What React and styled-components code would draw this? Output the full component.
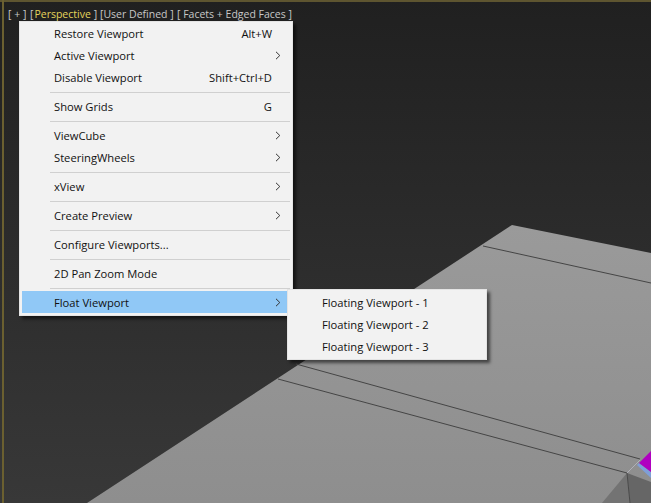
import React from "react";
import styled, { createGlobalStyle } from "styled-components";

const Global = createGlobalStyle`
  html, body { margin: 0; padding: 0; background: #2a2a2a; }
  body { width: 651px; height: 503px; overflow: hidden; }
`;

const Viewport = styled.div`
  position: relative;
  width: 651px;
  height: 503px;
  box-sizing: border-box;
  overflow: hidden;
  background: linear-gradient(180deg, #202020 0%, #383838 100%);
  font-family: "Open Sans", "Noto Sans", sans-serif;
  font-size: 11.2px;
`;

const FrameTop = styled.div`
  position: absolute;
  left: 0;
  top: 0;
  width: 100%;
  height: 2px;
  background: #5e5530;
`;

const FrameLeft = styled.div`
  position: absolute;
  left: 2px;
  top: 0;
  width: 2px;
  height: 100%;
  background: #6b6030;
`;

const Scene = styled.svg`
  position: absolute;
  inset: 0;
`;

const Labels = styled.div`
  position: relative;
  display: flex;
  padding: 6px 0 0 8px;
  height: 17px;
  line-height: 17px;
  font-size: 10.5px;
  white-space: pre;
`;

const Label = styled.span`
  width: ${(p) => p.$width}px;
  color: #c8c8c8;
`;

const Active = styled.span`
  color: #e4d45c;
  margin: 0 3px 0 1px;
`;

const Menu = styled.div`
  position: absolute;
  left: ${(p) => p.$left}px;
  top: ${(p) => p.$top}px;
  width: ${(p) => p.$width}px;
  box-sizing: border-box;
  padding: ${(p) => p.$padTop}px 2px 2px;
  background: #f2f2f2;
  border: 1px solid #e4e4e4;
  box-shadow: 3px 3px 3px rgba(0, 0, 0, 0.55);
  color: #111;
`;

const Item = styled.div`
  display: flex;
  align-items: center;
  height: 22px;
  padding-left: 32px;
  background: ${(p) => (p.$selected ? "#90c8f6" : "transparent")};
`;

const ItemName = styled.span`
  flex: 1;
`;

const Shortcut = styled.span`
  margin-right: 18px;
`;

const Chevron = styled.svg`
  width: 6px;
  height: 9px;
  margin-right: 9px;
`;

const Separator = styled.div`
  height: 1px;
  margin: 4px 0 2px 28px;
  background: #d0d0d0;
`;

const Arrow = () => (
  <Chevron viewBox="0 0 6 9">
    <path d="M1 0.8 L4.8 4.5 L1 8.2" fill="none" stroke="#333" strokeWidth="1" />
  </Chevron>
);

const groups = [
  [
    { name: "Restore Viewport", key: "Alt+W" },
    { name: "Active Viewport", sub: true },
    { name: "Disable Viewport", key: "Shift+Ctrl+D" },
  ],
  [{ name: "Show Grids", key: "G" }],
  [
    { name: "ViewCube", sub: true },
    { name: "SteeringWheels", sub: true },
  ],
  [{ name: "xView", sub: true }],
  [{ name: "Create Preview", sub: true }],
  [{ name: "Configure Viewports..." }],
  [{ name: "2D Pan Zoom Mode" }],
  [{ name: "Float Viewport", sub: true, selected: true }],
];

export default function App() {
  return (
    <Viewport>
      <Global />
      <Scene width="651" height="503" viewBox="0 0 651 503">
        <defs>
          <linearGradient id="floor" x1="0" y1="0" x2="0" y2="1">
            <stop offset="0" stopColor="#9a9a9a" />
            <stop offset="1" stopColor="#8e8e8e" />
          </linearGradient>
        </defs>
        <polygon points="512,225 651,253 651,503 87,503" fill="url(#floor)" />
        <g stroke="#454545" strokeWidth="1">
          <line x1="483" y1="246" x2="651" y2="283" />
          <line x1="296" y1="364" x2="640" y2="459" />
          <line x1="278" y1="379" x2="627" y2="473" />
        </g>
        <polygon points="627,473 602,503 630,503" fill="#737373" />
        <polygon points="627,473 651,482 651,503 630,503" fill="#666666" />
        <line x1="627" y1="473" x2="630" y2="503" stroke="#4a4a4a" strokeWidth="1" />
        <line x1="627" y1="473" x2="640" y2="460" stroke="#b0b0b8" strokeWidth="1" />
        <polygon points="637,465 639,463 651,472 651,478" fill="#7f9fd8" />
        <polygon points="639,463 651,451 651,472" fill="#b000c0" />
      </Scene>
      <FrameTop />
      <FrameLeft />
      <Labels>
        <Label $width={22}>[ + ]</Label>
        <Label $width={70}>[<Active>Perspective</Active>]</Label>
        <Label $width={77}>[User Defined ]</Label>
        <Label>[ Facets + Edged Faces ]</Label>
      </Labels>
      <Menu $left={19} $top={21} $width={274} $padTop={0}>
        {groups.map((group, i) => (
          <React.Fragment key={i}>
            {i > 0 && <Separator />}
            {group.map((it) => (
              <Item key={it.name} $selected={it.selected}>
                <ItemName>{it.name}</ItemName>
                {it.key && <Shortcut>{it.key}</Shortcut>}
                {it.sub && <Arrow />}
              </Item>
            ))}
          </React.Fragment>
        ))}
      </Menu>
      <Menu $left={287} $top={289} $width={200} $padTop={1}>
        <Item>Floating Viewport - 1</Item>
        <Item>Floating Viewport - 2</Item>
        <Item>Floating Viewport - 3</Item>
      </Menu>
    </Viewport>
  );
}
